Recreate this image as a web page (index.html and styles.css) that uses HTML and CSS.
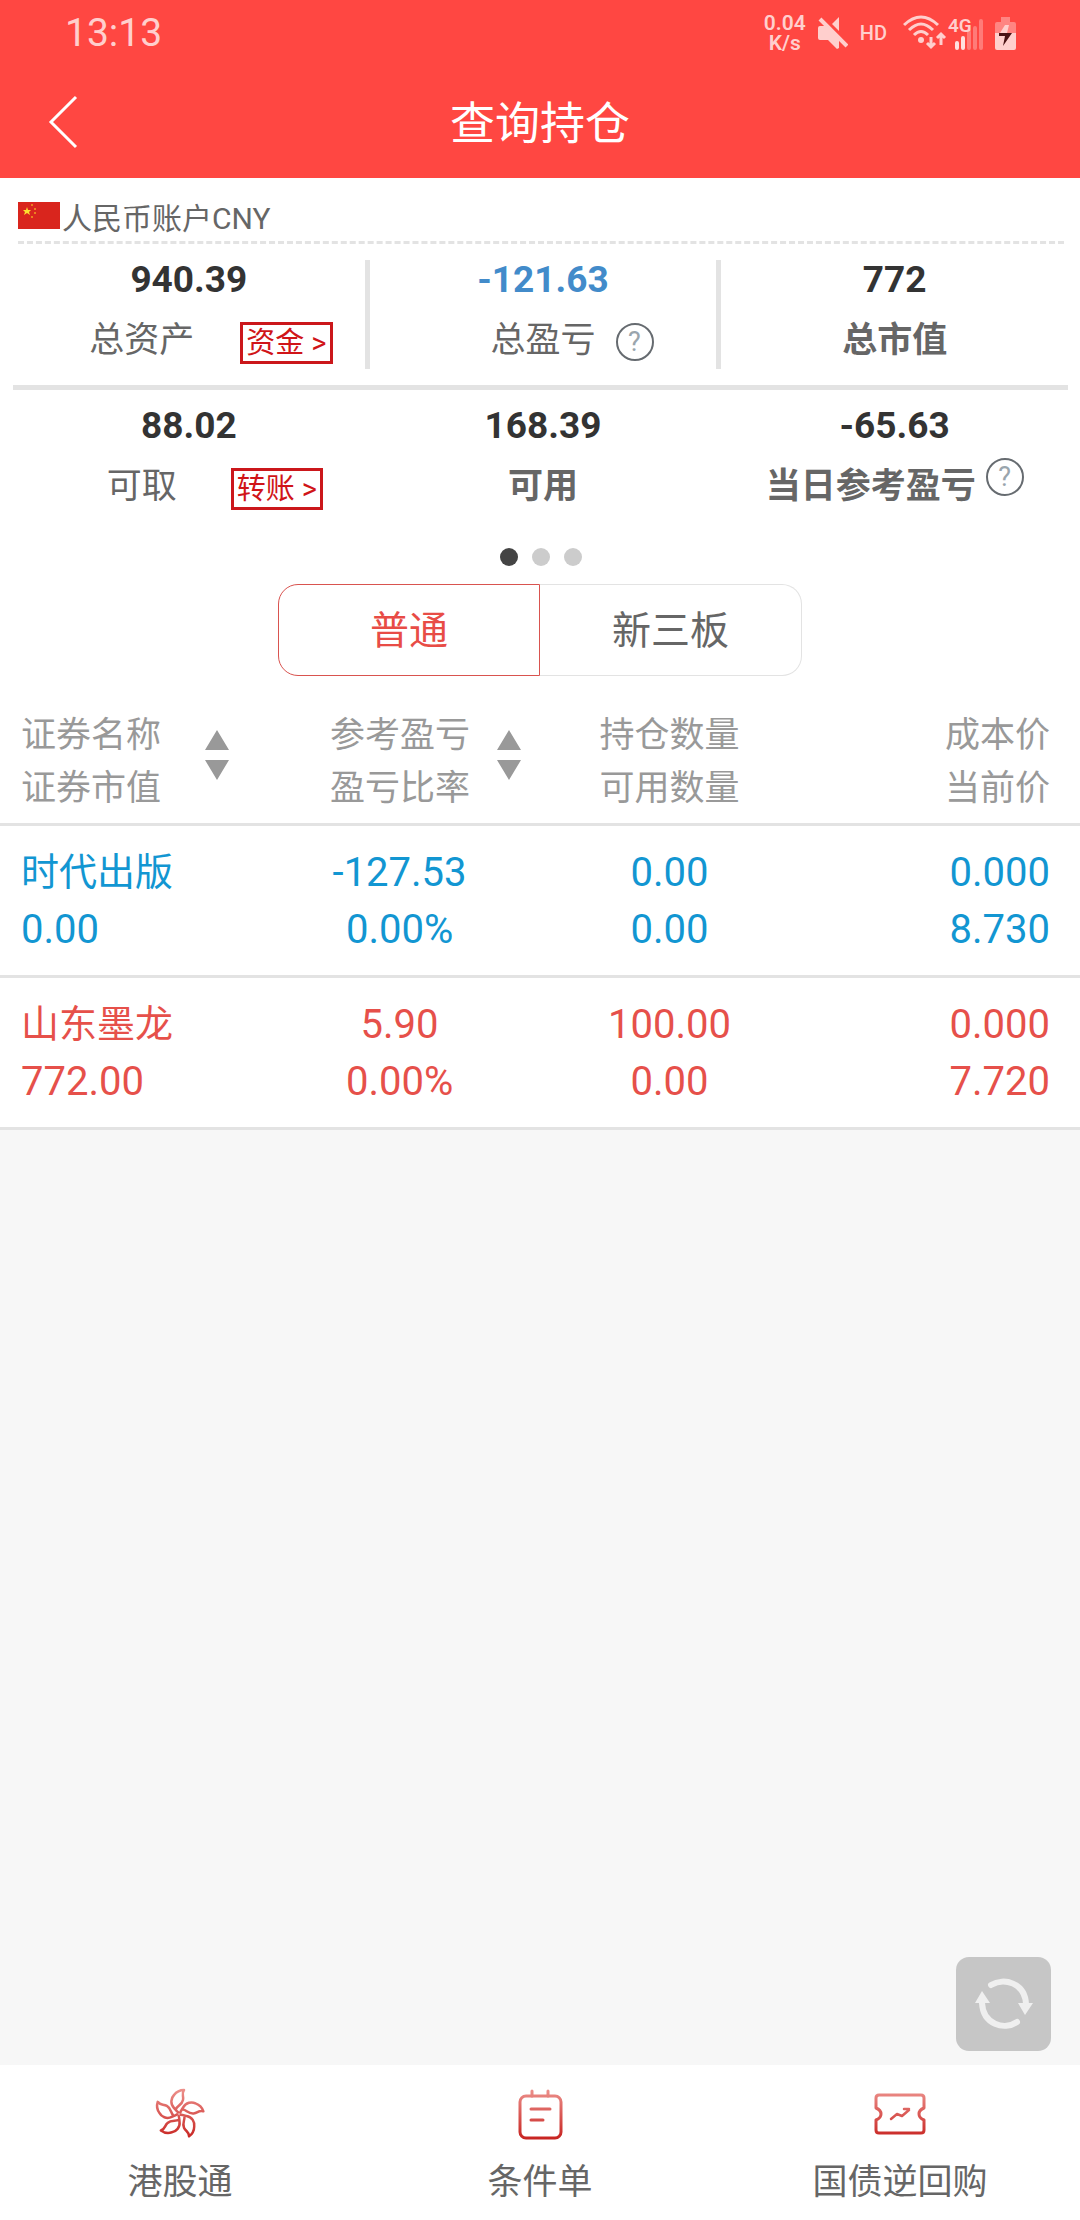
FILE: index.html
```html
<!DOCTYPE html>
<html lang="zh-CN">
<head>
  <meta charset="UTF-8" />
  <meta name="viewport" content="width=device-width, initial-scale=1.0"/>
  <title>查询持仓</title>
  <link rel="stylesheet" href="styles.css">
</head>
<body>
  <header class="header">
    <div class="status">
      <span class="clock">13:13</span>
      <div class="status-icons">
        <span class="speed">0.04<br>K/s</span>
        <svg width="30" height="34" viewBox="0 0 30 34" fill="#ffcfcd">
          <path d="M2 10h5l14 14v8l-2 1-9-9H2q-2 0-2-2V12q0-2 2-2z"/>
          <path d="M21 1v14l-7-7z"/>
          <path d="M2 3l27 27" stroke="#ffcfcd" stroke-width="4"/>
        </svg>
        <span class="hd">HD</span>
        <svg width="80" height="36" viewBox="0 0 80 36">
          <g fill="none" stroke="#ffcfcd" stroke-width="3">
            <path d="M1 10Q18-6 35 10"/>
            <path d="M6 15Q18 3 30 15"/>
            <path d="M11 20Q18 13 25 20"/>
            <path d="M28 22v9M24 28l4 4 4-4M38 30V20M34 23l4-4 4 4"/>
          </g>
          <circle cx="18" cy="25" r="3" fill="#ffcfcd"/>
          <path d="M54 28v5M60 23v10" stroke="#ffe0df" stroke-width="4" stroke-linecap="round"/>
          <path d="M66 17v16M72 13v20M78 6v27" stroke="#ff7b78" stroke-width="4" stroke-linecap="round"/>
          <text x="45" y="17" class="net">4G</text>
        </svg>
        <svg width="22" height="34" viewBox="0 0 22 34">
          <path d="M6 1h9v5h4q2 0 2 2v9H0V8q0-2 2-2h4z" fill="#ff8582"/>
          <path d="M0 17h21v15q0 2-2 2H2q-2 0-2-2z" fill="#ffcfcd"/>
          <path d="M10 9h4l-2 8H5z" fill="#ffcfcd"/>
          <path d="M4 17h13l-9 13 2-10H4z" fill="#4a1214"/>
        </svg>
      </div>
    </div>
    <nav class="titlebar">
      <button class="back" aria-label="返回">
        <svg width="30" height="54" viewBox="0 0 30 54" fill="none" stroke="#fff" stroke-width="3"><path d="M28 2L3 27l25 25"/></svg>
      </button>
      <h1>查询持仓</h1>
    </nav>
  </header>

  <main class="content">
    <section class="account">
      <div class="account-name">
        <svg width="42" height="27" viewBox="0 0 42 27">
          <path fill="#d9251d" d="M0 0h42v27H0z"/>
          <path fill="#fde02f" d="M9 5l1 3h3l-2 2 1 3-3-2-3 2 1-3-2-2h3z"/>
          <g fill="#f0a020"><circle cx="14" cy="3" r="1"/><circle cx="17" cy="7" r="1"/><circle cx="17" cy="11" r="1"/><circle cx="14" cy="15" r="1"/></g>
        </svg>
        <span>人民币账户CNY</span>
      </div>

      <div class="stats">
        <div class="stat">
          <div class="value">940.39</div>
          <div class="label with-link">总资产<a class="tag" href="#funds">资金 &gt;</a></div>
        </div>
        <div class="stat">
          <div class="value loss">-121.63</div>
          <div class="label with-help">总盈亏
            <button class="help" aria-label="总盈亏说明">?</button>
          </div>
        </div>
        <div class="stat">
          <div class="value">772</div>
          <div class="label strong">总市值</div>
        </div>
      </div>

      <div class="stats">
        <div class="stat">
          <div class="value">88.02</div>
          <div class="label with-link short">可取<a class="tag" href="#transfer">转账 &gt;</a></div>
        </div>
        <div class="stat">
          <div class="value">168.39</div>
          <div class="label strong">可用</div>
        </div>
        <div class="stat">
          <div class="value">-65.63</div>
          <div class="label strong day">当日参考盈亏
            <button class="help" aria-label="当日参考盈亏说明">?</button>
          </div>
        </div>
      </div>

      <div class="dots"><i class="dot on"></i><i class="dot"></i><i class="dot"></i></div>
    </section>

    <div class="tabs">
      <button class="tab active">普通</button>
      <button class="tab">新三板</button>
    </div>

    <table class="holdings">
      <thead>
        <tr>
          <th>
            <button class="sort">
              <span>证券名称<br>证券市值</span>
              <svg width="24" height="50" viewBox="0 0 24 50" fill="#999"><path d="M12 0l12 20H0zM0 30h24L12 50z"/></svg>
            </button>
          </th>
          <th>
            <button class="sort">
              <span>参考盈亏<br>盈亏比率</span>
              <svg width="24" height="50" viewBox="0 0 24 50" fill="#999"><path d="M12 0l12 20H0zM0 30h24L12 50z"/></svg>
            </button>
          </th>
          <th>持仓数量<br>可用数量</th>
          <th>成本价<br>当前价</th>
        </tr>
      </thead>
      <tbody>
        <tr class="down">
          <td><span class="name">时代出版</span><br>0.00</td>
          <td>-127.53<br>0.00%</td>
          <td>0.00<br>0.00</td>
          <td>0.000<br>8.730</td>
        </tr>
        <tr class="up">
          <td><span class="name">山东墨龙</span><br>772.00</td>
          <td>5.90<br>0.00%</td>
          <td>100.00<br>0.00</td>
          <td>0.000<br>7.720</td>
        </tr>
      </tbody>
    </table>

    <button class="refresh" aria-label="刷新">
      <svg width="60" height="54" viewBox="0 0 60 54">
        <g fill="none" stroke="#efefef" stroke-width="6" stroke-linecap="round">
          <path d="M17 8C30 0 51 6 52 27"/>
          <path d="M43 45C30 54 9 47 8 26"/>
        </g>
        <path d="M44 26h15l-8 12zM1 26h15L8 14z" fill="#efefef"/>
      </svg>
    </button>
  </main>

  <footer class="bottom">
    <a href="#hk">
      <svg width="52" height="54" viewBox="0 0 52 54">
        <defs>
          <linearGradient id="red" gradientUnits="userSpaceOnUse" x1="0" y1="0" x2="0" y2="54">
            <stop offset="0" stop-color="#ee9590"/>
            <stop offset="1" stop-color="#c61f1c"/>
          </linearGradient>
          <path id="petal" d="M0-1C-3-3-4-5-5-6C-9-10-8-16-5-19C-2-23 1-24 5-24C2-20 5-18 4-14C3-9-2-8-3-5"/>
          <mask id="flower">
            <g transform="translate(25 27)" fill="none" stroke="#fff" stroke-width="2.5" stroke-linejoin="round">
              <use href="#petal"/>
              <use href="#petal" transform="rotate(72)"/>
              <use href="#petal" transform="rotate(144)"/>
              <use href="#petal" transform="rotate(216)"/>
              <use href="#petal" transform="rotate(288)"/>
            </g>
          </mask>
        </defs>
        <path d="M0 0h52v54H0z" fill="url(#red)" mask="url(#flower)"/>
      </svg>
      港股通
    </a>
    <a href="#orders">
      <svg width="52" height="54" viewBox="0 0 52 54" fill="none" stroke="url(#red)" stroke-width="3" stroke-linecap="round">
        <rect x="6" y="9" width="41" height="42" rx="6"/>
        <path d="M18 4v5M34 4v5M17 22h19M17 33h12"/>
      </svg>
      条件单
    </a>
    <a href="#repo">
      <svg width="52" height="54" viewBox="0 0 52 54" fill="none" stroke="url(#red)" stroke-width="3" stroke-linecap="round" stroke-linejoin="round">
        <path d="M5 8h42q3 0 3 3v10q-5 2-5 6t5 6v10q0 3-3 3H5q-3 0-3-3V33q5-2 5-6t-5-6V11q0-3 3-3z"/>
        <path d="M17 32l6-5 5 2 7-6M30 22h5" stroke-width="2.5"/>
      </svg>
      国债逆回购
    </a>
  </footer>
</body>
</html>
```
FILE: styles.css
```css
* {
  box-sizing: border-box;
}
body {
  font-family: Roboto, "Noto Sans CJK SC", sans-serif;
  background: #f7f7f7;
  color: #666;
  margin: 0;
  min-height: 100vh;
  display: flex;
  flex-direction: column;
}
button {
  font: inherit;
  color: inherit;
  background: none;
  border: 0;
  padding: 0;
}
a {
  color: inherit;
  text-decoration: none;
}
svg {
  display: block;
  flex: none;
}

/* header */
.header {
  background: #ff4742;
  color: #fff;
}
.status {
  display: flex;
  justify-content: space-between;
  align-items: center;
  height: 66px;
  padding: 0 63px 0 65px;
  color: #ffcfcd;
}
.clock {
  font-size: 39px;
}
.status-icons {
  display: flex;
  align-items: center;
  gap: 12px;
}
.speed {
  font-size: 21px;
  line-height: 20px;
  font-weight: 600;
  text-align: center;
}
.hd {
  font-size: 20px;
  font-weight: 500;
  margin-right: 4px;
}
.net {
  font-size: 19px;
  font-weight: 600;
  fill: #ffcfcd;
}
.titlebar {
  display: grid;
  grid-template-columns: 1fr auto 1fr;
  align-items: center;
  height: 112px;
  padding: 0 48px;
}
.titlebar h1 {
  font-size: 45px;
  line-height: 60px;
  font-weight: 400;
  margin: 0;
  padding-top: 5px;
}

/* account summary */
.content {
  flex: 1;
  position: relative;
}
.account {
  background: #fff;
  padding: 15px 12px 18px 13px;
}
.account-name {
  display: flex;
  align-items: center;
  gap: 2px;
  height: 51px;
  margin: 0 4px 0 5px;
  padding-bottom: 3px;
  font-size: 30px;
  border-bottom: 3px dashed #e3e3e3;
}
.stats {
  display: grid;
  grid-template-columns: repeat(3, 1fr);
  padding: 16px 0;
}
.stats + .stats {
  border-top: 5px solid #e3e3e3;
}
.stat {
  height: 109px;
}
.stat + .stat {
  border-left: 5px solid transparent;
}
.stats:nth-of-type(2) .stat + .stat {
  border-left-color: #e3e3e3;
}
.value {
  font-size: 37px;
  line-height: 40px;
  font-weight: 700;
  text-align: center;
  color: #333;
}
.loss {
  color: #428bca;
}
.label {
  display: flex;
  justify-content: center;
  align-items: flex-start;
  margin-top: 12px;
  font-size: 35px;
  line-height: 58px;
}
.strong {
  font-weight: 700;
}
.with-link {
  gap: 46px;
  padding-left: 44px;
}
.short {
  gap: 54px;
  padding-left: 52px;
}
.with-help {
  gap: 20px;
  padding-left: 58px;
}
.day {
  gap: 10px;
}
.tag {
  font-size: 29px;
  line-height: 36px;
  padding: 0 3px;
  margin-top: 10px;
  color: #d01418;
  border: 3px solid #cb171b;
}
.help {
  width: 38px;
  height: 38px;
  margin-top: 11px;
  border: 2px solid #666b70;
  border-radius: 50%;
  font-size: 27px;
  line-height: 34px;
  font-weight: 400;
  color: #9aa5ad;
}
.day .help {
  margin-top: 0;
}
.dots {
  display: flex;
  justify-content: center;
  gap: 14px;
  padding-top: 17px;
}
.dot {
  width: 18px;
  height: 18px;
  border-radius: 50%;
  background: #ccc;
}
.dot.on {
  background: #444;
}

/* market tabs */
.tabs {
  display: flex;
  justify-content: center;
  background: #fff;
}
.tab {
  width: 262px;
  height: 92px;
  padding-bottom: 6px;
  font-size: 39px;
  border: 1px solid #e3e3e3;
  border-left: 0;
  border-radius: 0 20px 20px 0;
}
.tab.active {
  color: #e84c46;
  border: 1px solid #d9534f;
  border-radius: 20px 0 0 20px;
}

/* holdings */
.holdings {
  width: 100%;
  table-layout: fixed;
  border-spacing: 0;
  background: #fff;
}
th, td {
  border-bottom: 3px solid #e3e3e3;
  text-align: center;
}
th {
  font-size: 35px;
  line-height: 53px;
  font-weight: 400;
  color: #999;
  padding: 33px 0 8px;
  width: 25%;
}
td {
  font-size: 40px;
  line-height: 57px;
  padding: 17px 0;
}
th:first-child, td:first-child {
  text-align: left;
  padding-left: 21px;
}
th:nth-child(2) {
  width: 24%;
}
th:nth-child(3) {
  width: 26%;
}
th:last-child, td:last-child {
  text-align: right;
  padding-right: 30px;
}
.sort {
  display: flex;
  align-items: flex-start;
  gap: 44px;
}
.sort svg {
  margin-top: 21px;
}
th:nth-child(2) .sort {
  gap: 27px;
  padding-left: 60px;
}
.name {
  font-size: 38px;
}
.down {
  color: #1296d2;
}
.up {
  color: #e6504a;
}

.refresh {
  position: absolute;
  right: 29px;
  bottom: 14px;
  width: 95px;
  height: 94px;
  border-radius: 13px;
  background: #c6c6c6;
  display: flex;
  justify-content: center;
  align-items: center;
}

/* bottom bar */
.bottom {
  display: grid;
  grid-template-columns: repeat(3, 1fr);
  background: #fff;
  padding: 22px 0 12px;
}
.bottom a {
  display: flex;
  flex-direction: column;
  align-items: center;
  gap: 17px;
  font-size: 35px;
  line-height: 50px;
}
```
